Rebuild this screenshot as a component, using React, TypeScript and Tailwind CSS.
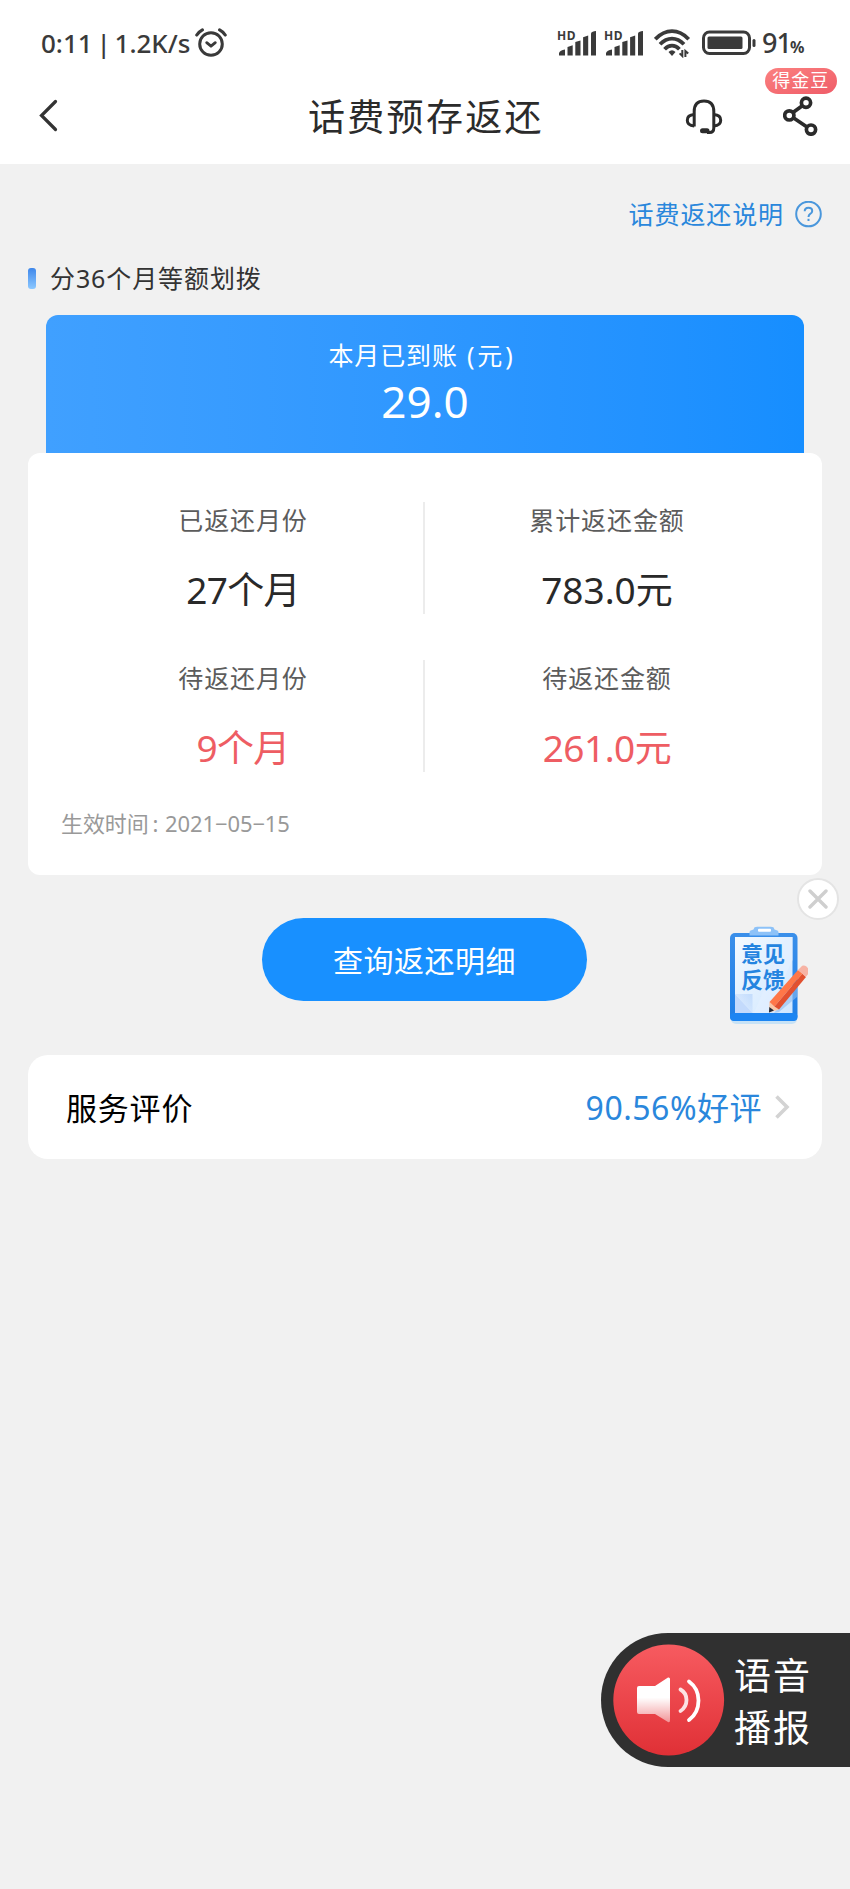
import type { ReactNode } from "react";

const DARK = "#3a3a3a";

function AlarmIcon() {
  return (
    <svg width="32" height="30" viewBox="0 0 32 30" fill="none" stroke={DARK} strokeLinecap="round">
      <circle cx="16" cy="16" r="11.3" strokeWidth="3" />
      <path d="M11.7 14.7 L16 18.2 L20.3 14.7" strokeWidth="2.8" strokeLinejoin="round" />
      <path d="M1.8 7 Q4 3.6 7.4 1.9 M30.2 7 Q28 3.6 24.6 1.9" strokeWidth="3.2" />
    </svg>
  );
}

function SignalIcon() {
  return (
    <svg width="41" height="37" viewBox="0 -5 41 37" fill={DARK}>
      <text x="0" y="9.6" fontSize="12" fontWeight="700" fontFamily="Noto Sans, sans-serif" textLength="18.5">
        HD
      </text>
      <path d="M2 25.5 V23 Q3 20.3 8 19.6 V25.5 Z" />
      <path d="M10.5 25.5 V17 L15.7 15.2 V25.5 Z" />
      <path d="M18.3 25.5 V12 L23.5 10.4 V25.5 Z" />
      <path d="M26.1 25.5 V7.3 L31.2 5.6 V25.5 Z" />
      <path d="M34 25.5 V3.2 Q35 1.2 39 1 V25.5 Z" />
    </svg>
  );
}

function WifiIcon() {
  return (
    <svg width="37" height="29" viewBox="0 0 37 29" fill="none" stroke={DARK} strokeWidth="3.8">
      <path d="M1.3 10.2 Q9 2.2 18 2.2 Q27 2.2 34.7 10.2" />
      <path d="M6 15.3 Q11.5 9.6 18 9.6 Q24.5 9.6 30 15.3" />
      <path d="M10.6 20.2 Q14 16.6 18 16.6 Q22 16.6 25.4 20.2" />
      <path d="M14.5 23 Q18 19.5 21.5 23 L18 27 Z" fill={DARK} stroke="none" />
      <path d="M28.3 21 V27 L25.6 24.4 M31.4 28 V22 L34.2 24.6" strokeWidth="2" />
    </svg>
  );
}

function BatteryIcon() {
  return (
    <svg width="54" height="26" viewBox="0 0 54 26" fill="none">
      <rect x="1.5" y="2" width="46" height="21.5" rx="6" stroke={DARK} strokeWidth="3" />
      <rect x="5.5" y="6.5" width="35" height="12.5" rx="1.5" fill={DARK} />
      <rect x="50.5" y="9" width="3" height="8" rx="1.5" fill={DARK} />
    </svg>
  );
}

function HeadsetIcon() {
  return (
    <svg width="38" height="36" viewBox="0 0 38 36" fill="none" stroke="#2b2b2b" strokeWidth="3">
      <path d="M9.2 27.5 V12.5 Q9.2 2 19 2 Q28.8 2 28.8 12.5 V29 Q28.8 33.5 24.5 33.5 H22" />
      <path d="M9.2 15.6 Q2.3 16 2.3 21.3 Q2.3 26.6 9.2 27" />
      <path d="M28.8 15.6 Q35.7 16 35.7 21.3 Q35.7 26.6 28.8 27" />
      <path d="M17.5 31.8 H22" strokeWidth="5" strokeLinecap="round" />
    </svg>
  );
}

function ShareIcon() {
  return (
    <svg width="35" height="40" viewBox="0 0 35 40" fill="none" stroke="#2b2b2b" strokeWidth="3.7">
      <circle cx="23" cy="6.7" r="4.6" />
      <circle cx="6.3" cy="19.4" r="4.6" />
      <circle cx="28" cy="33.6" r="4.6" />
      <path d="M19.3 9.7 L10 16.5 M10.3 21.8 L24 31" />
    </svg>
  );
}

function ClipboardIcon() {
  return (
    <div className="relative h-[104px] w-[84px]">
      <svg className="absolute inset-0" width="84" height="104" viewBox="0 0 84 104">
        <defs>
          <linearGradient id="paper" x1="0" y1="0" x2="1" y2="1">
            <stop offset="0" stopColor="#f4faff" />
            <stop offset="1" stopColor="#cfe6ff" />
          </linearGradient>
          <linearGradient id="board" x1="0" y1="0" x2="0" y2="1">
            <stop offset="0" stopColor="#3a8fea" />
            <stop offset="1" stopColor="#1f7fe6" />
          </linearGradient>
          <linearGradient id="fold" x1="0" y1="1" x2="1" y2="0">
            <stop offset="0" stopColor="#e6f1ff" />
            <stop offset="1" stopColor="#a9cbfa" />
          </linearGradient>
        </defs>
        <rect x="7" y="13" width="66" height="87" rx="5" fill="#b5dcf8" opacity="0.7" />
        <rect x="6" y="9" width="67.5" height="88" rx="5" fill="url(#board)" />
        <rect x="6" y="89" width="67.5" height="8" rx="4" fill="#1c85f2" />
        <rect x="11" y="13" width="57.5" height="76" fill="url(#paper)" />
        <path d="M68.5 13 V36 L44 89 H30 L62 13 Z" fill="#e2f0ff" opacity="0.7" />
        <path d="M11 70 L28.5 89 H11 Z" fill="#c3dafc" />
        <path d="M11 70 H28.5 V89 Z" fill="url(#fold)" opacity="0.55" />
        <path d="M25.5 11.5 V8 Q25.5 6.5 28 6 Q30 5.5 30 4.5 Q30 2.8 33 2.8 H47 Q50 2.8 50 4.5 Q50 5.5 52 6 Q54.5 6.5 54.5 8 V11.5 Z" fill="#8dc2f8" />
        <rect x="34" y="4.8" width="13" height="3" rx="1" fill="#fff" />
      </svg>
      <div className="absolute top-[14.5px] left-[17px] w-[46px] font-['Noto_Sans_CJK_SC',sans-serif] text-[22px] leading-[26px] font-bold text-[#2484e0]">
        意见反馈
      </div>
      <svg className="absolute inset-0" width="84" height="104" viewBox="0 0 84 104">
        <path d="M50 89 L73 63 L73 73 L55 88 Z" fill="#8fbdf0" opacity="0.6" />
        <path d="M45 88.5 L45.5 78 L55 85.5 Z" fill="#f9c8a8" />
        <path d="M45 88.5 L45.3 83 L50 86.5 Z" fill="#222b3a" />
        <path d="M45.5 78 L74 46 L78.5 49.5 L50.5 82.5 Z" fill="#ff7748" />
        <path d="M50.5 82.5 L78.5 49.5 L82 53 L55 85.5 Z" fill="#e2502f" />
        <path d="M74 46 L77 43 Q79 40.5 82.5 42.5 Q86 46 84.5 49.5 L81.8 53 Z" fill="#f7b3a4" />
      </svg>
    </div>
  );
}

function SpeakerIcon() {
  return (
    <svg width="112" height="112" viewBox="0 0 112 112" fill="none">
      <defs>
        <linearGradient id="disc" x1="0" y1="0" x2="0" y2="1">
          <stop offset="0" stopColor="#f75b60" />
          <stop offset="1" stopColor="#e03036" />
        </linearGradient>
        <linearGradient id="horn" x1="0" y1="0" x2="0" y2="1">
          <stop offset="0.45" stopColor="#fff" />
          <stop offset="1" stopColor="#fff" stopOpacity="0.45" />
        </linearGradient>
      </defs>
      <circle cx="55.7" cy="56" r="55.4" fill="url(#disc)" />
      <path d="M24 44 Q24 42 26 42 H42 L55 33.5 Q57 33 57 35 V76 Q57 79 55 78 L42 70 H26 Q24 70 24 68 Z" fill="url(#horn)" />
      <g stroke="#fff" strokeWidth="3.8" strokeLinecap="round">
        <path d="M67.5 45.5 Q73.5 49 73.5 56 Q73.5 63 67.5 67" opacity="0.85" />
        <path d="M76 37.5 Q85.5 44.5 85.5 56.5 Q85.5 69 76 76" />
      </g>
    </svg>
  );
}

function Stat({ label, value, red }: { label: string; value: ReactNode; red?: boolean }) {
  return (
    <div className="flex flex-1 flex-col items-center">
      <div className="h-[37px] text-[25px] leading-[37px] tracking-[0.9px] text-[#5c5c5c]">{label}</div>
      <div
        className={
          "mt-[29px] h-[44px] text-[37px] leading-[44px] " + (red ? "text-[#ee5d63]" : "text-[#292929]")
        }
      >
        {value}
      </div>
    </div>
  );
}

function StatRow({ children }: { children: ReactNode }) {
  return <div className="flex h-[112px] pl-[35px] pr-[35px]">{children}</div>;
}

function Divider() {
  return <div className="h-[112px] w-0.5 bg-[#ececec]" />;
}

export default function App() {
  return (
    <div className="relative flex h-[1889px] w-[850px] flex-col overflow-hidden bg-[#f1f1f1] font-['Noto_Sans','Noto_Sans_CJK_SC',sans-serif]">
      <header className="h-[164px] shrink-0 bg-white">
        <div className="flex h-[86px] items-center pl-[41px] pr-[46px] text-[#3a3a3a]">
          <span className="w-[154px] whitespace-nowrap text-[26px] font-medium [word-spacing:-3px]">0:11 | 1.2K/s</span>
          <AlarmIcon />
          <div className="ml-auto flex items-center">
            <SignalIcon />
            <div className="w-[6px]" />
            <SignalIcon />
            <div className="w-[9px]" />
            <WifiIcon />
            <div className="w-[11px]" />
            <BatteryIcon />
            <div className="ml-[6px] flex items-baseline font-medium">
              <span className="w-[28px] text-[27px] tracking-[-1px]">91</span>
              <span className="w-[14px] text-[16px] font-bold">%</span>
            </div>
          </div>
        </div>
        <div className="grid h-[60px] grid-cols-[308px_1fr_308px] items-center">
          <svg className="ml-[38px]" width="22" height="36" viewBox="0 0 22 36" fill="none" stroke="#333" strokeWidth="3.2" strokeLinecap="round">
            <path d="M17.5 2.5 L3.5 16.5 L17.5 30.5" />
          </svg>
          <h1 className="whitespace-nowrap pt-[1px] text-[37px] leading-[60px] tracking-[2.3px] text-[#2b2b2b]">话费预存返还</h1>
          <div className="flex items-center pl-[141px]">
            <HeadsetIcon />
            <div className="relative -mt-[2px] ml-[60px]">
              <ShareIcon />
              <span className="absolute -top-[28px] -left-[18px] h-[26px] w-[72px] whitespace-nowrap rounded-full bg-gradient-to-br from-[#fb8080] to-[#ef5c68] text-center text-[18px] leading-[25px] tracking-[1px] text-white">
                得金豆
              </span>
            </div>
          </div>
        </div>
      </header>

      <main className="flex flex-col px-[28px]">
        <div className="mt-[30px] flex h-10 items-center justify-end text-[#2a87dc]">
          <span className="pt-[2px] text-[25px] tracking-[0.9px]">话费返还说明</span>
          <svg className="ml-[11px]" width="27" height="27" viewBox="0 0 27 27" fill="none" stroke="#4a97dc" strokeWidth="2">
            <circle cx="13.5" cy="13" r="12.3" />
            <path d="M9.7 10.3 Q9.7 6.7 13.4 6.7 Q17.2 6.7 17.2 9.9 Q17.2 11.8 15.2 12.9 Q13.5 13.9 13.5 16" />
            <path d="M13.5 17.8 V20" />
          </svg>
        </div>

        <div className="mt-[24px] flex h-10 items-center">
          <div className="h-[21px] w-2 rounded-[3px] bg-gradient-to-b from-[#3f87ea] to-[#8cc8ff]" />
          <span className="ml-[14px] pt-[2px] text-[25px] tracking-[0.9px] text-[#333]">分36个月等额划拨</span>
        </div>

        <section className="mx-[18px] mt-[17px] flex h-[137.5px] flex-col items-center rounded-t-[12px] bg-gradient-to-r from-[#40a0ff] to-[#168eff] text-white">
          <div className="mt-[20px] mr-[8px] h-10 text-[25px] leading-10 tracking-[0.9px]">
            本月已到账<span className="ml-[9px]">(</span>
            <span className="ml-[2px]">元</span>
            <span className="ml-[2px]">)</span>
          </div>
          <div className="h-[52px] text-[44px] leading-[52px]">29.0</div>
        </section>

        <section className="h-[422.5px] rounded-[12px] bg-white pt-[49px]">
          <StatRow>
            <Stat label="已返还月份" value={<span className="tracking-[-0.7px]">27个月</span>} />
            <Divider />
            <div className="flex flex-1 pl-[2px]">
              <Stat label="累计返还金额" value="783.0元" />
            </div>
          </StatRow>
          <div className="h-[46px]" />
          <StatRow>
            <Stat label="待返还月份" value={<span className="tracking-[-0.7px]">9个月</span>} red />
            <Divider />
            <div className="flex flex-1 pl-[2px]">
              <Stat label="待返还金额" value={<span className="tracking-[-0.5px]">261.0元</span>} red />
            </div>
          </StatRow>
          <div className="mt-[35px] flex pl-[33px] text-[22px] leading-8 text-[#999]">
            <span className="w-[104px] whitespace-nowrap tracking-[-0.1px]">
              生效时间<span className="ml-[4px]">:</span>
            </span>
            <span className="whitespace-nowrap tracking-[-0.1px]">2021−05−15</span>
          </div>
        </section>

        <button className="mt-[43px] mr-[1px] h-[83px] w-[325px] self-center rounded-full bg-[#1890ff] pt-[1px] text-[30px] tracking-[0.5px] text-white">
          查询返还明细
        </button>

        <section className="mt-[54px] flex h-[104px] items-center rounded-[20px] bg-white pl-[38px] pr-[32px]">
          <span className="pt-[2px] text-[31px] tracking-[0.8px] text-black">服务评价</span>
          <span className="ml-auto pt-[1px] text-[32px] tracking-[0.5px] text-[#2a87dc]">90.56%好评</span>
          <svg className="ml-[12px]" width="16" height="26" viewBox="0 0 16 26" fill="none" stroke="#d3d3d3" strokeWidth="3.6">
            <path d="M2.5 2.5 L13 13 L2.5 23.5" />
          </svg>
        </section>
      </main>

      <button className="absolute top-[878px] left-[797px] flex size-[42px] items-center justify-center rounded-full border-2 border-[#e4e4e4] bg-white">
        <svg width="20" height="20" viewBox="0 0 20 20" stroke="#cfcfcf" strokeWidth="3.4" strokeLinecap="round">
          <path d="M2 2 L18 18 M18 2 L2 18" />
        </svg>
      </button>
      <div className="absolute top-[924px] left-[724px]">
        <ClipboardIcon />
      </div>

      <aside className="absolute top-[1633px] right-0 flex h-[134px] w-[249px] items-center rounded-l-full bg-[#303030] pl-[12px] text-white">
        <SpeakerIcon />
        <div className="ml-[9px] w-[78px] pt-[3px] text-[37px] leading-[52px] tracking-[2px]">语音播报</div>
      </aside>
    </div>
  );
}
